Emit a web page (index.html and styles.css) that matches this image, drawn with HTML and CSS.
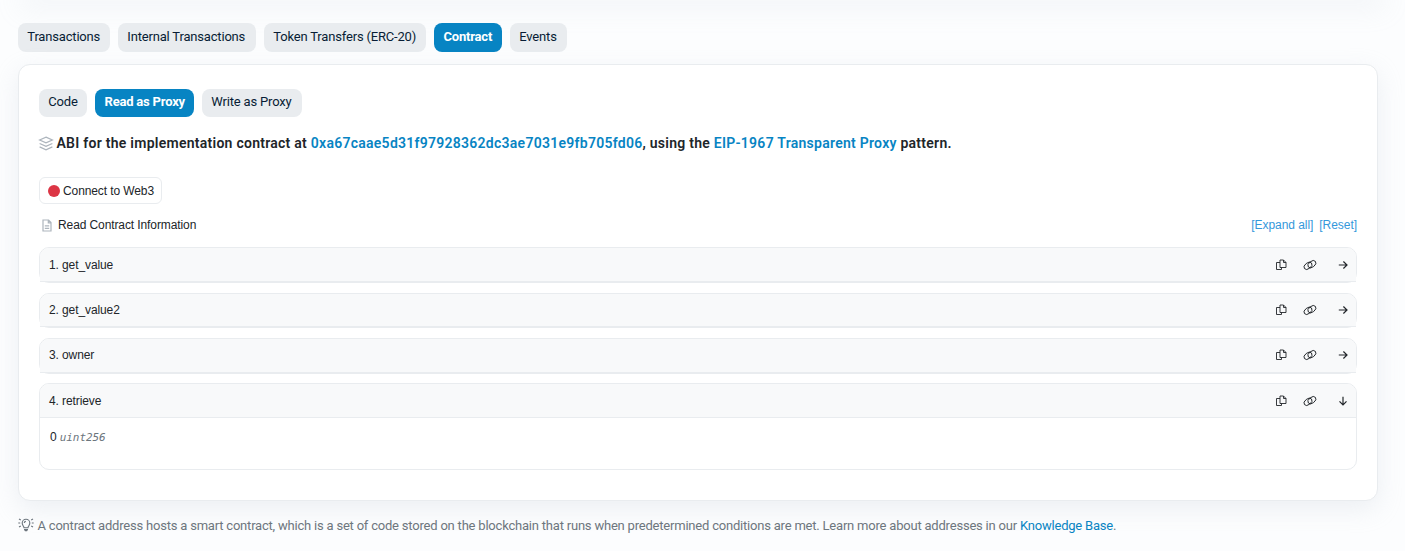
FILE: index.html
```html
<!DOCTYPE html>
<html lang="en">
<head>
<meta charset="utf-8">
<title>Contract</title>
<link rel="stylesheet" href="styles.css">
</head>
<body>
<svg class="defs" width="0" height="0">
  <symbol id="copy" viewBox="0 0 12 12"><path d="M5 1h3.500l2.500 2.500v5H5zM8.500 1v2.500H11M5 3.500H1.500v7H6.500V8.500"/></symbol>
  <symbol id="link" viewBox="0 0 14 12"><ellipse cx="5" cy="6.800" rx="4.500" ry="2.900" transform="rotate(-38 5 6.8)"/><ellipse cx="8.900" cy="5.200" rx="4.500" ry="2.900" transform="rotate(-38 8.9 5.2)"/></symbol>
  <symbol id="arrow" viewBox="0 0 10 10"><path d="M.8 5h8M5.400 1.500L9 5 5.400 8.500"/></symbol>
</svg>
<div class="above"></div>
<main class="page">
  <nav class="tabs">
    <a class="tab t1">Transactions</a><a class="tab t2">Internal Transactions</a><a class="tab t3">Token Transfers (ERC-20)</a><a class="tab t4 active">Contract</a><a class="tab t5">Events</a>
  </nav>
  <section class="card">
    <nav class="tabs sub">
      <a class="tab s1">Code</a><a class="tab s2 active">Read as Proxy</a><a class="tab s3">Write as Proxy</a>
    </nav>
    <h1 class="abi"><svg class="layers" viewBox="0 0 16 16"><path d="M8 1.200l6.800 3L8 7.300 1.200 4.200zM1.200 8L8 11.100 14.800 8M1.200 11.600L8 14.700l6.800-3.100"/></svg><span>ABI for the implementation contract at <a>0xa67caae5d31f97928362dc3ae7031e9fb705fd06</a>, using the <a>EIP-1967 Transparent Proxy</a> pattern.</span></h1>
    <button class="connect"><i class="dot"></i>Connect to Web3</button>
    <div class="info">
      <svg class="doc" viewBox="0 0 10 13"><path d="M1 1h5.600L9 3.600V12H1zM6.300 1v2.900H9M2.800 6.900h4.400M2.800 9.400h4.400"/></svg>
      <span class="info-text">Read Contract Information</span>
      <span class="actions"><a>[Expand all]</a><a>[Reset]</a></span>
    </div>
    <div class="rows">
      <div class="row"><div class="head"><span>1. get_value</span><svg class="copy"><use href="#copy"/></svg><svg class="link"><use href="#link"/></svg><svg class="arrow"><use href="#arrow"/></svg></div></div>
      <div class="row short"><div class="head"><span>2. get_value2</span><svg class="copy"><use href="#copy"/></svg><svg class="link"><use href="#link"/></svg><svg class="arrow"><use href="#arrow"/></svg></div></div>
      <div class="row"><div class="head raised"><span>3. owner</span><svg class="copy"><use href="#copy"/></svg><svg class="link"><use href="#link"/></svg><svg class="arrow"><use href="#arrow"/></svg></div></div>
      <div class="open">
        <div class="head"><span>4. retrieve</span><svg class="copy"><use href="#copy"/></svg><svg class="link"><use href="#link"/></svg><svg class="arrow down"><use href="#arrow"/></svg></div>
        <div class="result">0 <em>uint256</em></div>
      </div>
    </div>
  </section>
  <footer class="note">
    <svg class="bulb" viewBox="0 0 16 14"><path d="M6 9.700C5.800 8.200 4.200 7.300 4.200 5a3.800 3.800 0 017.600 0c0 2.300-1.600 3.200-1.800 4.700zM6.300 4.900c0-.9.7-1.600 1.600-1.600M.3 5h1.900M13.800 5h1.900M1 1l1.800 1M15 1l-1.800 1M1 9l1.800-1M15 9l-1.800-1"/><path class="base" d="M6 11h4v.8L9 13.300H7l-1-1.500z"/></svg>
    <span>A contract address hosts a smart contract, which is a set of code stored on the blockchain that runs when predetermined conditions are met. Learn more about addresses in our <a>Knowledge Base</a>.</span>
  </footer>
</main>
</body>
</html>
```
FILE: styles.css
```css
* { box-sizing: border-box; }
body { margin: 0; height: 551px; overflow: hidden; background: #fcfdfe; font-family: Roboto, sans-serif; font-size: 13px; color: #212529; }
.defs { position: absolute; }
svg { fill: none; stroke: #212529; stroke-width: .9; flex: none; }
a { color: #0784c3; text-decoration: none; }
.above { height: 0; margin: 0 28px; box-shadow: 0 0 26px 8px rgba(189, 197, 209, .18); }
.page { padding: 23px 27px 0 18px; }
.tabs { display: flex; gap: 8px; height: 29px; }
.tab { display: flex; padding: 6px 0 0 9.300px; line-height: 16px; border-radius: 8px; background: #e9ecef; color: #081d35; font-weight: 450; letter-spacing: -.18px; white-space: nowrap; }
.tab.active { background: #0784c3; color: #fff; font-weight: 700; letter-spacing: -.2px; padding-left: 9.500px; }
.t1 { width: 92px; } .t2 { width: 138px; } .t3 { width: 162px; } .t4 { width: 68px; } .t5 { width: 57px; }
.s1 { width: 48px; } .s2 { width: 99px; } .s3 { width: 100px; }
.card { margin-top: 12px; height: 437px; padding: 24px 20px 0; border: 1px solid #e9ecef; border-radius: 12px; background: #fff; box-shadow: 0 8px 24px rgba(189, 197, 209, .24); position: relative; }
.sub { height: 28px; }
.sub .tab { padding-top: 5px; }
.abi { display: flex; align-items: center; height: 20px; margin: 16px 0 0; font-size: 14px; line-height: 20px; font-weight: 600; letter-spacing: .262px; white-space: nowrap; }
.layers { width: 16px; height: 15px; margin: 0 3px 0 -1.500px; stroke: #adb5bd; stroke-width: 1.300; }
.connect { display: flex; align-items: center; width: 123px; height: 27px; margin: 24px 0 0; padding: 0 8px; border: 1px solid #e9ecef; border-radius: 6px; background: #fff; font: 12px "Liberation Sans", Arial, sans-serif; letter-spacing: -.1px; color: #212529; white-space: nowrap; }
.dot { width: 12px; height: 12px; margin: 0 3px 0 0; border-radius: 50%; background: #dc3545; flex: none; }
.info { display: flex; align-items: center; height: 20px; margin-top: 11px; font: 12px "Liberation Sans", Arial, sans-serif; letter-spacing: -.1px; }
.doc { width: 10px; height: 13px; margin: 0 6px 0 3px; stroke: #adb5bd; stroke-width: 1.200; }
.actions { display: flex; gap: 6px; margin-left: auto; letter-spacing: -.05px; }
.actions a { color: #3498db; }
.rows { margin-top: 12px; font: 12px "Liberation Sans", Arial, sans-serif; letter-spacing: -.1px; color: #212529; }
.row { height: 36px; margin-bottom: 10px; border: 1px solid #e9ecef; border-radius: 10px; }
.row.short { height: 35px; }
.head { display: flex; align-items: center; height: 34px; padding: 0 8px 0 9px; border-bottom: 1px solid #e9ecef; border-radius: 9px 9px 0 0; background: #f8f9fa; }
.short .head { height: 33px; }
.raised { padding-bottom: 1px; }
.copy { width: 12px; height: 12px; margin-left: auto; }
.link { width: 14px; height: 12px; margin-left: 16px; }
.arrow { width: 10px; height: 10px; margin-left: 21px; stroke-width: 1.200; }
.down { transform: rotate(90deg); }
.open { height: 87px; margin-top: -1px; border: 1px solid #e9ecef; border-radius: 10px; }
.result { padding: 12px 10px; line-height: 14px; }
.result em { font: italic 11px "DejaVu Sans Mono", monospace; letter-spacing: -.1px; color: #6c757d; }
.note { display: flex; align-items: center; height: 20px; margin-top: 14px; color: #6c757d; letter-spacing: -.205px; white-space: nowrap; }
.bulb { width: 16px; height: 14px; margin-right: 3.500px; stroke: #6c757d; stroke-width: 1.150; }
.base { fill: #6c757d; stroke: none; }
```
